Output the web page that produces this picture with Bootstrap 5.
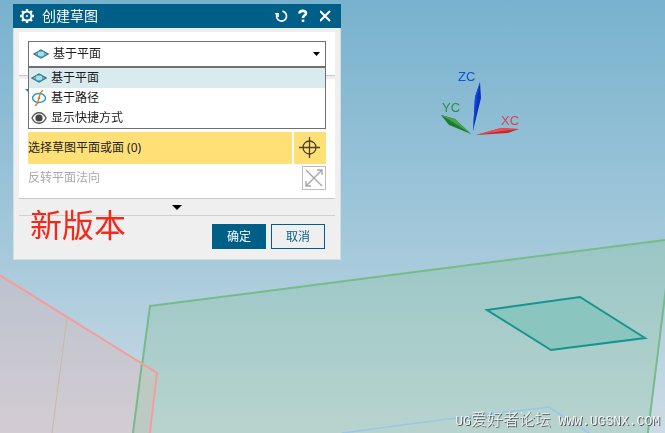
<!DOCTYPE html>
<html lang="zh-CN">
<head>
<meta charset="utf-8">
<meta name="viewport" content="width=device-width, initial-scale=1">
<title>创建草图</title>
<link href="https://cdn.jsdelivr.net/npm/bootstrap@5.3.0/dist/css/bootstrap.min.css" rel="stylesheet">
<style>
  body { font-family: "Noto Sans", "Noto Sans CJK SC", sans-serif; font-size: 12px; line-height: 20px; color: #1c1c1c;
    background: linear-gradient(#78b2ce, #a5c9db 58%, #cddbe5 100%) no-repeat fixed; }
  .scene { z-index: -1; }
  .scene text { font: 13px "Liberation Sans", sans-serif; }
  .dlg { width: 328px; margin: 4px 13px; background: #efefef; border: solid #d3dee2; border-width: 0 1px 1px; }
  .dlg-title { height: 24px; margin: 0 -1px; padding: 0 9px 0 7px; background: #005f87; color: #fff; }
  .dlg-title h1 { font-size: 14px; line-height: 26px; font-weight: 400; }
  .plain { background: none; border: 0; padding: 0; color: inherit; line-height: 0; }
  .dlg-body { padding: 4px 5px 0; }
  .pane { background: #fff; padding: 9px; border-bottom: 1px solid #c8c8c8; }
  .kind-pane { padding-bottom: 8px; margin-bottom: 3px; }
  .kind { height: 26px; border: 1px solid #707070; border-radius: 0; padding: 0 24px; appearance: none; background: #fff; color: inherit; font-size: 12px; outline: 0; }
  .kind-icon { left: 5px; top: 5px; }
  .kind-arrow { right: 6px; top: 11px; }
  .options { top: 100%; z-index: 5; border: 1px solid #707070; background: #fff; }
  .options button { height: 20px; padding: 0 2px; gap: 4px; border: 0; background: none; color: inherit; line-height: 20px; }
  .options .chosen { background: #daebef; }
  .plane-pane { padding: 0 9px 8px; }
  .group-head { height: 53px; padding-top: 9px; }
  .group-head button { margin-left: -3px; }
  .pick-row { gap: 2px; margin-bottom: 2px; }
  .pick { height: 32px; line-height: 32px; background: #ffe077; color: #222; }
  .plain.pick-btn { width: 32px; height: 32px; background: #ffe077; }
  .flip { color: #a9a9a9; line-height: 24px; }
  .plain.flip-btn { width: 24px; height: 24px; border: 1px solid #bdbdbd; }
  .more { height: 17px; border-bottom: 1px solid #d0d0d0; }
  .foot { padding: 8px 15px 10px; gap: 5px; }
  .foot .btn { width: 54px; height: 25px; padding: 0; border: 1px solid #005f87; border-radius: 0; font-size: 12px; line-height: 23px; color: #005f87; }
  .foot .btn-ok { background: #005f87; color: #fff; }
  .note { left: 16px; bottom: 14px; font-size: 32px; line-height: 40px; color: #f5281c; }
  .site { right: 5px; bottom: 1px; font-family: "Liberation Mono", monospace; font-size: 13px; line-height: 20px; color: #f1f4f4; text-shadow: 1px 1px 0 #555; }
  .site span { font-family: "Noto Sans CJK SC", sans-serif; font-size: 16px; font-weight: 300; }
</style>
<script src="https://cdn.jsdelivr.net/npm/bootstrap@5.3.0/dist/js/bootstrap.bundle.min.js"></script>
</head>
<body class="min-vh-100 overflow-hidden">
<svg width="0" height="0" class="position-absolute" aria-hidden="true">
  <symbol id="plane" viewBox="0 0 16 16">
    <path d="M1 8 8 4l7 4-7 4z" fill="#c8e9f0" stroke="#4f6770" stroke-width="1.3"/>
    <ellipse cx="8" cy="8" rx="4" ry="3" fill="#aadde8" stroke="#289eb5" stroke-width="1.2"/>
  </symbol>
</svg>

<svg class="scene position-fixed top-0 start-0 w-100 h-100" viewBox="0 0 665 433" preserveAspectRatio="xMinYMin slice" aria-hidden="true">
  <defs>
    <linearGradient id="gr" x2="0" y2="1"><stop stop-color="#99c6c5"/><stop offset="1" stop-color="#b9d4cf"/></linearGradient>
    <linearGradient id="rd" x2="0" y2="1"><stop stop-color="#bbc3ce"/><stop offset="1" stop-color="#d5ccd3"/></linearGradient>
  </defs>
  <path d="M150 306 672 239 647 440H132z" fill="url(#gr)" stroke="#76bb8a" stroke-width="2"/>
  <path d="M-2 274 157 373 149 440H-2z" fill="url(#rd)"/>
  <path d="M142 364 157 373 149 440H133z" fill="#bdcac4"/>
  <path d="M67 318 52 433" stroke="#c7bba0" fill="none"/>
  <path d="M142 363 133 433" stroke="#76bb8a" stroke-width="2"/>
  <path d="M-2 274 157 373 149 440" fill="none" stroke="#f79c9d" stroke-width="2"/>
  <path d="M487 310 580 297 645 338 551 350z" fill="#8ac5c0" stroke="#159490" stroke-width="2"/>
  <path d="M342 433 440 420 549 407 592 435" fill="none" stroke="#98c8e6" stroke-width="1.600"/>
  <path d="M480 82 481 98 473 131 475 97z" fill="#0a35bd"/><path d="M480 82 477 98 473 131 475 97z" fill="#1748df"/>
  <path d="M441 115 455 119 471 134 449 125z" fill="#217b2f"/><path d="M441 115 455 119 471 134 453 122z" fill="#43a64c"/>
  <path d="M476 135 501 128 519 129 508 133z" fill="#b72e37"/><path d="M476 135 501 128 519 129 502 131z" fill="#ee4d53"/>
  <text x="458" y="81" fill="#1552dc">ZC</text>
  <text x="442" y="112" fill="#299044">YC</text>
  <text x="501" y="125" fill="#d8434c">XC</text>
</svg>

<main>
<section class="dlg position-relative" role="dialog" aria-labelledby="title">
  <header class="dlg-title d-flex align-items-center">
    <svg width="14" height="14" viewBox="0 0 14 14" fill="none" stroke="#fff" aria-hidden="true"><circle cx="7" cy="7" r="4.500" stroke-width="2"/><path d="M7 0v2M7 12v2M0 7h2M12 7h2M2 2l1.500 1.500M10.500 10.500 12 12M2 12l1.500-1.500M10.500 3.500 12 2" stroke-width="2.400"/><circle cx="7" cy="7" r="1" fill="#fff" stroke="none"/></svg>
    <h1 id="title" class="mb-0 ms-2 me-auto">创建草图</h1>
    <button type="button" class="plain me-2" aria-label="重置"><svg width="14" height="14" viewBox="0 0 14 14" fill="none" stroke="#fff" stroke-width="1.700"><path d="M8.500 2.200A5 5 0 1 1 3 5"/><path d="M1 4.600h3.200V8" stroke-width="1.400"/></svg></button>
    <button type="button" class="plain me-2" aria-label="帮助"><svg width="12" height="14" viewBox="0 0 12 14" fill="none" stroke="#fff" stroke-width="2.600"><path d="M3.500 4.500C3.500 1 10 1 10 4.200 10 6.500 7 6 7 9M7 10.500V13"/></svg></button>
    <button type="button" class="plain ms-1" aria-label="关闭"><svg width="12" height="12" viewBox="0 0 12 12" stroke="#fff" stroke-width="2"><path d="M0 1l10 10M10 1 0 11"/></svg></button>
  </header>
  <div class="dlg-body">
    <div class="pane kind-pane">
      <div class="position-relative">
        <select class="kind w-100 d-block" aria-label="草图类型"><option>基于平面</option><option>基于路径</option></select>
        <svg class="kind-icon position-absolute pe-none" width="16" height="16" aria-hidden="true"><use href="#plane"/></svg>
        <svg class="kind-arrow position-absolute pe-none" width="7" height="4" aria-hidden="true"><path d="M0 0h7L3.500 4z"/></svg>
        <div class="options position-absolute w-100">
          <button type="button" class="chosen w-100 d-flex align-items-center"><svg width="16" height="16" aria-hidden="true"><use href="#plane"/></svg>基于平面</button>
          <button type="button" class="w-100 d-flex align-items-center"><svg width="16" height="16" viewBox="0 0 16 16" fill="none" aria-hidden="true"><ellipse cx="8" cy="8" rx="6.500" ry="4.500" stroke="#2a9ebd" stroke-width="1.500"/><path d="M12 0C8 3 9 6 8 8s0 5-4 8" stroke="#d77a2b" stroke-width="1.300"/><circle cx="8" cy="8" r="1.300" fill="#ea7a1b"/></svg>基于路径</button>
          <button type="button" class="w-100 d-flex align-items-center"><svg width="16" height="16" viewBox="0 0 16 16" aria-hidden="true"><path d="M1 8c3-7 11-7 14 0-3 7-11 7-14 0z" fill="#fff" stroke="#555" stroke-width="1.300"/><circle cx="8" cy="8" r="3.600" fill="#444"/></svg>显示快捷方式</button>
        </div>
      </div>
    </div>
    <div class="pane plane-pane">
      <div class="group-head"><button type="button" class="plain d-block" aria-label="展开"><svg class="d-block" width="6" height="4"><path d="M0 1h6L3 4z" fill="#287f9e"/></svg></button></div>
      <div class="pick-row d-flex">
        <div class="pick flex-grow-1">选择草图平面或面 (0)</div>
        <button type="button" class="plain pick-btn" aria-label="选择平面"><svg width="22" height="22" viewBox="0 0 22 22" fill="none" stroke="#4b4126" stroke-width="1.300"><circle cx="10.500" cy="10.500" r="6.500"/><path d="M10.500 0v21M0 10.500h21"/></svg></button>
      </div>
      <div class="flip d-flex justify-content-between">
        <span>反转平面法向</span>
        <button type="button" class="plain flip-btn" disabled aria-label="反转平面法向"><svg width="18" height="18" viewBox="0 0 18 18" fill="none" stroke="#a5a5a5" stroke-width="1.300"><path d="m1 1 16 16M1 17 17 1M12 1h5v5M1 12v5h5"/></svg></button>
      </div>
    </div>
    <div class="more d-flex justify-content-center"><button type="button" class="plain" aria-label="更多"><svg width="10" height="5"><path d="M0 0h10L5 5z"/></svg></button></div>
  </div>
  <footer class="foot d-flex justify-content-end">
    <button type="button" class="btn btn-ok">确定</button>
    <button type="button" class="btn">取消</button>
  </footer>
  <div class="note position-absolute">新版本</div>
</section>
<div class="site position-absolute">UG<span>爱好者论坛</span> WWW.UGSNX.COM</div>
</main>
</body>
</html>
